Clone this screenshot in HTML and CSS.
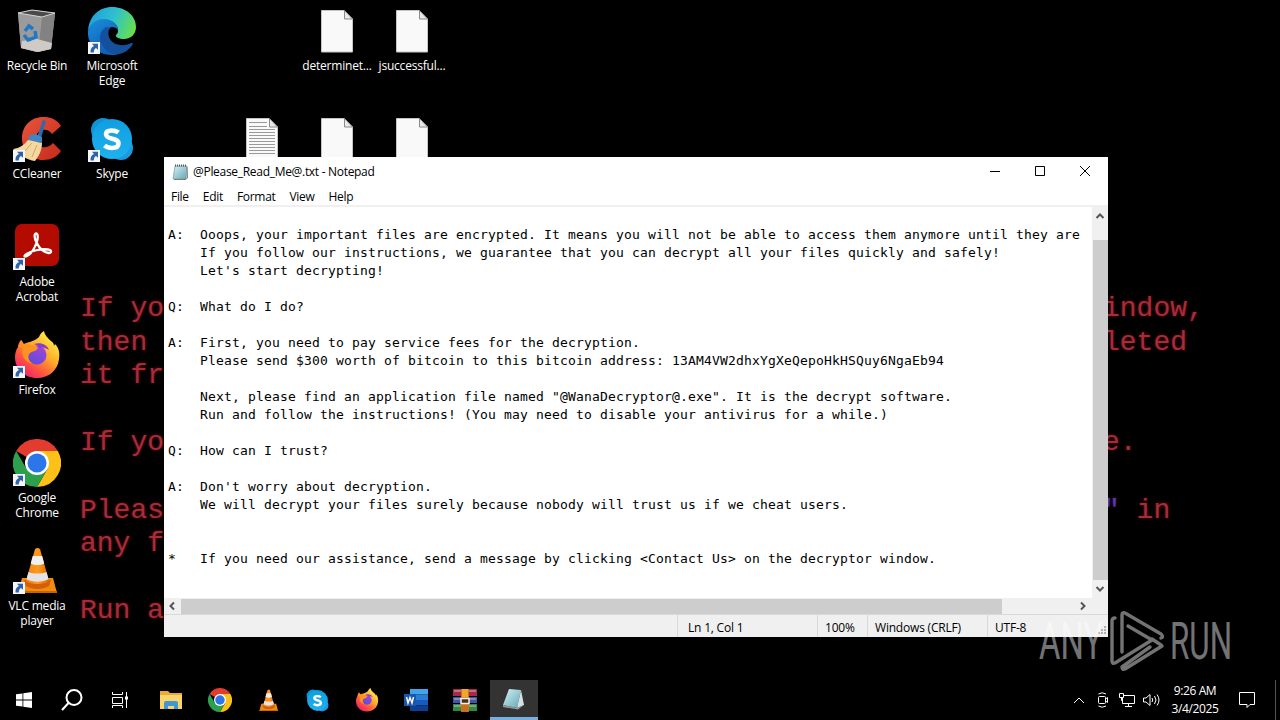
FILE: index.html
```html
<!DOCTYPE html>
<html lang="en">

<head>
    <meta charset="UTF-8">
    <meta name="viewport" content="width=device-width, initial-scale=1.0">
    <title>Desktop</title>
    <link rel="stylesheet" href="styles.css">
</head>

<body>
    <!-- shared icons -->
    <svg class="defs" width="0" height="0">
        <defs>
            <linearGradient id="edgeTop" x1="0" y1="0.3" x2="1" y2="0.6">
                <stop offset="0" stop-color="#1f9fd8" />
                <stop offset="0.5" stop-color="#2fc0cf" />
                <stop offset="1" stop-color="#67e04b" />
            </linearGradient>
            <linearGradient id="edgeMid" x1="0" y1="0" x2="0.6" y2="1">
                <stop offset="0" stop-color="#1b8fdc" />
                <stop offset="1" stop-color="#0f5cb4" />
            </linearGradient>
            <linearGradient id="skypeBg" x1="0" y1="0" x2="0" y2="1">
                <stop offset="0" stop-color="#0f9fe0" />
                <stop offset="1" stop-color="#1fb0ee" />
            </linearGradient>
            <linearGradient id="foxBody" x1="0.85" y1="0.1" x2="0.2" y2="0.95">
                <stop offset="0" stop-color="#fff04a" />
                <stop offset="0.4" stop-color="#ffab28" />
                <stop offset="0.7" stop-color="#ff5a3c" />
                <stop offset="1" stop-color="#f0206e" />
            </linearGradient>
            <linearGradient id="foxGlobe" x1="0.8" y1="0" x2="0.2" y2="1">
                <stop offset="0" stop-color="#a542dd" />
                <stop offset="1" stop-color="#5a4fd6" />
            </linearGradient>
            <linearGradient id="cone" x1="0" y1="0" x2="1" y2="0">
                <stop offset="0" stop-color="#f08010" />
                <stop offset="0.5" stop-color="#ff9a1e" />
                <stop offset="1" stop-color="#e06a00" />
            </linearGradient>
            <linearGradient id="red" x1="0" y1="0" x2="1" y2="1">
                <stop offset="0" stop-color="#e8553c" />
                <stop offset="1" stop-color="#c62a1c" />
            </linearGradient>
            <linearGradient id="pad" x1="0" y1="0" x2="1" y2="1">
                <stop offset="0" stop-color="#d8f0f5" />
                <stop offset="1" stop-color="#5fa9b8" />
            </linearGradient>
        </defs>
        <symbol id="shortcut" viewBox="0 0 12 12">
            <rect width="12" height="12" fill="#f4f6fa" />
            <path d="M4 1.800h6v6L8 6C6.300 7 5.800 8.500 5.800 10.600H2.600C2 7.500 3.500 5 6 3.900z" fill="#2f62a8" />
        </symbol>
        <symbol id="chrome" viewBox="0 0 48 48">
            <path d="M24 24 3.200 12A24 24 0 0 1 44.800 12z" fill="#e33b2e" />
            <path d="M44.800 12A24 24 0 0 1 24 48L34.400 30 24 12z" fill="#fbc116" />
            <path d="M3.200 12A24 24 0 0 0 24 48L34.400 30 24 24 13.600 30z" fill="#2da04e" />
            <circle cx="24" cy="24" r="12" fill="#fff" />
            <circle cx="24" cy="24" r="9.500" fill="#2a76ea" />
        </symbol>
        <symbol id="skype" viewBox="0 0 48 48">
            <circle cx="15" cy="15" r="12" fill="#0d93d8" />
            <circle cx="33" cy="33" r="12" fill="#1c9ae0" />
            <circle cx="24" cy="24" r="20" fill="url(#skypeBg)" />
            <path d="M30.500 17.500c-2-1.500-4.500-2-7-2-3.500 0-5.500 1.300-5.500 3.800 0 6 12.500 3 12.500 9.200 0 3.200-2.700 4.500-6.500 4.500-3 0-5.500-.8-7.500-2.500" fill="none" stroke="#fff" stroke-width="4.600" />
        </symbol>
        <symbol id="firefox" viewBox="0 0 48 48">
            <path d="M8 9c1 0 2 3 3 4 2-1 4-2 6-2 3-1 7-3 9-5 1-3 3-5 5-6 1 5 4 7 7 10 2 1 3 3 3 5l1-2c4 4 5 9 4 15C45 39 36 47 24 47 11 47 2 38 2 26c0-4 1-7 3-10 0-2 1-5 3-7z" fill="url(#foxBody)" />
            <circle cx="24" cy="24" r="9.500" fill="url(#foxGlobe)" />
            <path d="M5 15c5-3 9-2 13-1 3 0 5 0 7 3-2 4-6 3-8 5-3 3-2 8 3 11-9-2-12-9-10-15z" fill="#ff9320" />
            <path d="M21 13c6-2 13 0 15 6-3-2-6-3-9-2-2-3-4-3-6-4z" fill="#8a3bd0" />
        </symbol>
        <symbol id="vlc" viewBox="0 0 48 48">
            <path d="M9 31h31l4 15H5z" fill="#f28a12" />
            <path d="M5 44h39v2H5z" fill="#c96400" />
            <path d="M11 33h27l-2 6c-6 4-17 4-23 0z" fill="#d45f08" />
            <path d="M22 2q2.500-2 5 0l9 32c-5 4-18 4-23 0z" fill="url(#cone)" />
            <path d="M19.700 9h9.500l2 7.500c-4 2-9.500 2-13.500 0z" fill="#f0f0f0" />
            <path d="M15.500 25c5 2 13 2 18 0l2 7c-6 3.500-16 3.500-22 0z" fill="#e4e4e8" />
        </symbol>
        <symbol id="file" viewBox="0 0 48 48">
            <path d="M8.500 3.500H31l8.500 8.500v33H8.500z" fill="#f9f9f9" stroke="#c4c4c4" />
            <path d="M31.500 3.500v8.500h8z" fill="#e9e9e9" stroke="#8a8a8a" />
        </symbol>
        <symbol id="chevron" viewBox="0 0 10 10">
            <path d="M1.500 7 5 3.500 8.500 7" fill="none" stroke="#555" stroke-width="2" />
        </symbol>
    </svg>

    <div class="wallpaper">
        <pre class="left">If yo
then 
it fr

If yo

Pleas
any f

Run a</pre>
        <pre class="right">indow,
leted


e.

<span class="blue">"</span> in</pre>
    </div>

    <div class="icons">
        <div class="icon c1 r1">
            <svg viewBox="0 0 48 48">
                <path d="M5 6 19 3l23 3-4 36-14 3-16-4z" fill="#a3a3a3" />
                <path d="M5 6 29 10 24 45 8 41z" fill="#9b9b9b" />
                <path d="M29 10 42 6 38 42 25 45z" fill="#828282" />
                <path d="M9 34 24 32 39 36 38 42 25 45 8 41z" fill="#cfcac6" />
                <path d="M5 6 19 3l23 3-13 4z" fill="#4a4a4a" stroke="#d4d4d4" />
                <path d="M12 24l4-5 4 3M11 28l4 5 3-1M18 32l5-2-1-6" fill="none" stroke="#2078c4" stroke-width="3.500" />
            </svg>
            <span>Recycle Bin</span>
        </div>
        <div class="icon c2 r1">
            <svg viewBox="0 0 48 48">
                <path d="M0 24C1 9 11 0 24 0c14 0 24 9 24 20 0 7-5 12-12 12-5 0-9-2-8-4 2-2 2-3 2-5 0-6-7-10-14-9C8 14 2 18 0 24z" fill="url(#edgeTop)" />
                <path d="M0 24C2 16 9 12 16 12c8 0 14 5 14 11-1-2-4-3-6-3-5 1-7 6-7 11 0 8 6 15 14 16-3 1-6 1-8 1C9 48-1 37 0 24z" fill="url(#edgeMid)" />
                <path d="M18 20c-6 4-8 11-4 18 3 5 9 10 17 9 6-1 11-5 14-10 0-1-1-1-2-1-9 5-20 1-22-6-1-3-1-6 1-9-1-1-3-1-4-1z" fill="#14509c" />
            </svg>
            <svg class="badge"><use href="#shortcut" /></svg>
            <span>Microsoft<br>Edge</span>
        </div>
        <div class="icon c1 r2">
            <svg viewBox="0 0 48 48">
                <path d="M48 11C43 3 36 2 30 2 18 2 9 11 9 23c0 13 9 22 21 22 8 0 14-3 18-9l-8-8c-7 8-17 4-17-4 0-10 11-12 16-5z" fill="url(#red)" />
                <path d="M30 5l3 1-5 17-4-1z" fill="#2a6cae" />
                <path d="M17 20q6-2 12 2v6l-14-3z" fill="#3f86c6" />
                <path d="M15 25l14 3c0 7-3 13-7 18-8-1-16-6-22-12 7-1 11-4 15-9z" fill="#f4d8a0" />
                <path d="M12 36l7-8M19 42l5-12" stroke="#cda86a" fill="none" />
            </svg>
            <svg class="badge"><use href="#shortcut" /></svg>
            <span>CCleaner</span>
        </div>
        <div class="icon c2 r2">
            <svg><use href="#skype" /></svg>
            <svg class="badge"><use href="#shortcut" /></svg>
            <span>Skype</span>
        </div>
        <div class="icon c1 r3">
            <svg viewBox="0 0 48 48">
                <rect x="2" y="1" width="44" height="42" rx="7" fill="#b30b00" />
                <path d="M13 33.500c5-2 9-9 11-15 1.200-4 1-8-1-8s-1.800 5 .5 9c3 6 8 10 12 10.500 3.500.3 3.500-3-.5-3.500-7-1-17 1.500-21.500 4.500-2.500 1.500-2.500 3-.5 2.500z" fill="none" stroke="#fff" stroke-width="2.300" />
            </svg>
            <svg class="badge"><use href="#shortcut" /></svg>
            <span>Adobe<br>Acrobat</span>
        </div>
        <div class="icon c1 r4">
            <svg><use href="#firefox" /></svg>
            <svg class="badge"><use href="#shortcut" /></svg>
            <span>Firefox</span>
        </div>
        <div class="icon c1 r5">
            <svg><use href="#chrome" /></svg>
            <svg class="badge"><use href="#shortcut" /></svg>
            <span>Google<br>Chrome</span>
        </div>
        <div class="icon c1 r6">
            <svg><use href="#vlc" /></svg>
            <svg class="badge"><use href="#shortcut" /></svg>
            <span>VLC media<br>player</span>
        </div>
        <div class="icon c5 r1">
            <svg><use href="#file" /></svg>
            <span>determinet...</span>
        </div>
        <div class="icon c6 r1">
            <svg><use href="#file" /></svg>
            <span>jsuccessful...</span>
        </div>
        <div class="icon c4 r2">
            <svg viewBox="0 0 48 48">
                <use href="#file" />
                <path d="M11 7.500h18M11 11.500h18M11 14.500h26M11 17.500h26M11 20.500h26M11 23.500h26M11 26.500h26M11 29.500h26M11 32.500h26M11 35.500h26M11 38.500h26" stroke="#999" />
            </svg>
        </div>
        <div class="icon c5 r2">
            <svg><use href="#file" /></svg>
        </div>
        <div class="icon c6 r2">
            <svg><use href="#file" /></svg>
        </div>
    </div>

    <div class="window">
        <div class="titlebar">
            <svg class="app-icon" viewBox="0 0 16 16">
                <path d="M3 2h12l-1 13H1z" fill="url(#pad)" stroke="#6a9aa6" stroke-width="0.700" />
                <path d="M3 1.500h12" stroke="#555" stroke-dasharray="1 1" stroke-width="2" />
                <path d="M15 3l.5 11-2 1.500H2" fill="none" stroke="#8a7a66" />
            </svg>
            <span class="title">@Please_Read_Me@.txt - Notepad</span>
            <div class="controls">
                <svg viewBox="0 0 12 12"><path d="M1 6.500h10" /></svg>
                <svg viewBox="0 0 12 12"><path d="M1.500 1.500h9v9h-9z" /></svg>
                <svg viewBox="0 0 12 12"><path d="M1 1l10 10M11 1 1 11" /></svg>
            </div>
        </div>
        <div class="menu">
            <span>File</span>
            <span>Edit</span>
            <span>Format</span>
            <span>View</span>
            <span>Help</span>
        </div>
        <div class="editor">
            <pre class="text">A:  Ooops, your important files are encrypted. It means you will not be able to access them anymore until they are
    If you follow our instructions, we guarantee that you can decrypt all your files quickly and safely!
    Let's start decrypting!

Q:  What do I do?

A:  First, you need to pay service fees for the decryption.
    Please send $300 worth of bitcoin to this bitcoin address: 13AM4VW2dhxYgXeQepoHkHSQuy6NgaEb94

    Next, please find an application file named "@WanaDecryptor@.exe". It is the decrypt software.
    Run and follow the instructions! (You may need to disable your antivirus for a while.)

Q:  How can I trust?

A:  Don't worry about decryption.
    We will decrypt your files surely because nobody will trust us if we cheat users.


*   If you need our assistance, send a message by clicking &lt;Contact Us&gt; on the decryptor window.</pre>
            <div class="vscroll">
                <svg><use href="#chevron" /></svg>
                <div class="thumb"></div>
                <svg class="down"><use href="#chevron" /></svg>
            </div>
        </div>
        <div class="hscroll">
            <svg class="prev"><use href="#chevron" /></svg>
            <div class="thumb"></div>
            <svg class="next"><use href="#chevron" /></svg>
        </div>
        <div class="status">
            <span class="pos">Ln 1, Col 1</span>
            <span class="zoom">100%</span>
            <span class="eol">Windows (CRLF)</span>
            <span class="enc">UTF-8</span>
            <svg class="grip" viewBox="0 0 10 10">
                <path d="M7 1h2M4 4h2M7 4h2M1 7h2M4 7h2M7 7h2" stroke="#b0b0b0" stroke-width="2" />
            </svg>
        </div>
    </div>

    <svg class="watermark" viewBox="0 0 204 66">
        <g fill="#fff">
            <text x="3" y="51" textLength="64" lengthAdjust="spacingAndGlyphs">ANY</text>
            <text x="134" y="51" textLength="62" lengthAdjust="spacingAndGlyphs">RUN</text>
        </g>
        <g fill="none" stroke="#fff" stroke-width="3.400" stroke-linejoin="round" stroke-linecap="round">
            <path d="M86 44V7q0-3 3-2l36 21q3 3 0 4" />
            <path d="M79 10q-3 0-3 3v40q0 3 3 2l37-23L92 18" />
            <path d="M126 38 89 61q-3 1-3-2l28-20" />
            <path d="M116 31l9 6" />
        </g>
    </svg>

    <div class="taskbar">
        <div class="btn">
            <svg width="16" height="16" viewBox="0 0 16 16"><path d="M0 2.300 6.500 1.400V7.600H0zM7.300 1.300 16 0v7.600H7.300zM0 8.400h6.500v6.200L0 13.700zM7.300 8.400H16V16l-8.700-1.300z" fill="#fff" /></svg>
        </div>
        <div class="btn">
            <svg width="22" height="22" viewBox="0 0 22 22" fill="none" stroke="#fff" stroke-width="2"><circle cx="13" cy="8.500" r="7.500" /><path d="M7.500 14 1 21" /></svg>
        </div>
        <div class="btn tasks">
            <svg width="16" height="16" viewBox="0 0 16 16" fill="none" stroke="#fff"><path d="M.5 0v2.500h10V0M.5 5.500h10v6H.5zM.5 16v-2.500h10V16M14.500 0v16" /><path d="M13 6h3" stroke-width="3" /></svg>
        </div>
        <div class="btn app">
            <svg width="22" height="22" viewBox="0 0 22 22">
                <path d="M0 2h8l2 2h12v15H0z" fill="#e8ad35" />
                <path d="M0 6h22v14H0z" fill="#fbd56b" />
                <path d="M4 20v-6q0-2 2-2h10q2 0 2 2v6h-4v-3H8v3z" fill="#3f97d3" />
            </svg>
        </div>
        <div class="btn app"><svg width="24" height="24"><use href="#chrome" /></svg></div>
        <div class="btn app"><svg width="23" height="23"><use href="#vlc" /></svg></div>
        <div class="btn app"><svg width="25" height="25"><use href="#skype" /></svg></div>
        <div class="btn app"><svg width="24" height="24"><use href="#firefox" /></svg></div>
        <div class="btn app">
            <svg width="24" height="22" viewBox="0 0 24 22">
                <path d="M6 0h18v5.500H6z" fill="#41a5ee" />
                <path d="M6 5.500h18V11H6z" fill="#2b7cd3" />
                <path d="M6 11h18v5.500H6z" fill="#185abd" />
                <path d="M6 16.500h18V22H6z" fill="#103f91" />
                <path d="M0 5h12v12H0z" fill="#1a56b0" />
                <path d="M2.500 8 4 14 6 8.500 8 14 9.500 8" fill="none" stroke="#fff" stroke-width="1.400" />
            </svg>
        </div>
        <div class="btn app">
            <svg width="24" height="23" viewBox="0 0 24 23">
                <path d="M0 0h24v7H0z" fill="#a8284c" />
                <path d="M0 8h24v6H0z" fill="#3e55b0" />
                <path d="M0 15h24v7H0z" fill="#2f8a45" />
                <path d="M1 2h22M1 10h22M1 17h22" stroke="#d9b9b0" />
                <path d="M8 0h8v23H8z" fill="#c8701c" />
                <path d="M9 0h6v8H9z" fill="#f0a828" />
                <path d="M8 9.500h8v5H8z" fill="#4a3018" stroke="#f4f0e4" stroke-width="1.500" />
            </svg>
        </div>
        <div class="btn app active">
            <svg width="22" height="22" viewBox="0 0 22 22">
                <path d="M7 1l12 1-4 18-14-3z" fill="url(#pad)" />
                <path d="M19 2l3 15-7 3z" fill="#d4e2e6" />
                <path d="M1 17l14 3 7-3-6 4.500L1 19z" fill="#999" />
            </svg>
        </div>
        <div class="tray">
            <svg width="12" height="8" viewBox="0 0 12 8"><path d="M1 7l5-5 5 5" /></svg>
            <svg class="camera" width="12" height="16" viewBox="0 0 12 16"><path d="M1.500 5.500q0-1 1-1h5q1 0 1 1v5q0 1-1 1h-5q-1 0-1-1zM8.500 7l2-1.500v5L8.500 9M1.500 2Q5-.5 9 2M1.500 14q3.500 2.500 7.500 0" /></svg>
            <svg class="network" width="16" height="14" viewBox="0 0 16 14"><path d="M5 2.500h10.500v8H3.500V5M9.500 10.500v3M6 13.500h7M.5.500h4v4h-4zM2.500 4.500v3h1" /></svg>
            <svg width="17" height="14" viewBox="0 0 17 14"><path d="M.5 5v4h2.500l4 3.500v-11L3 5zM9 5q1.500 2 0 4M11.500 3q3 4 0 8M14 1.500q4 5.500 0 11" /></svg>
            <div class="clock">9:26 AM<br>3/4/2025</div>
            <svg class="notify" width="16" height="16" viewBox="0 0 16 16"><path d="M.5.500h15v12H11l-3 3v-3H.5z" /></svg>
        </div>
    </div>
</body>

</html>
```

FILE: styles.css
```css
* {
    box-sizing: border-box;
}

body {
    margin: 0;
    width: 1280px;
    height: 720px;
    overflow: hidden;
    position: relative;
    background-color: #000;
    color: #fff;
    font-family: 'Open Sans', 'Noto Sans', sans-serif;
    font-size: 12px;
}

pre {
    margin: 0;
}

.defs {
    position: absolute;
}

.wallpaper {
    position: absolute;
    inset: 0;
    display: flex;
    padding: 292px 0 0 80px;
}

.wallpaper pre {
    font-family: 'Liberation Mono', monospace;
    font-size: 28px;
    line-height: 33.6px;
    color: #a82c38;
    text-shadow: 0 0 3px #700c18;
}

.wallpaper .left {
    width: 1023px;
}

.wallpaper .blue {
    color: #4040c0;
}

.icons {
    position: absolute;
    left: 0;
    top: 0;
    display: grid;
    grid-template-columns: repeat(6, 75px);
    grid-template-rows: repeat(6, 108px);
}

.icon {
    position: relative;
    padding: 7px 1px 0 0;
    text-align: center;
    line-height: 15px;
    letter-spacing: -0.2px;
}

.icon svg {
    display: block;
    width: 48px;
    height: 48px;
    margin: 0 auto 3px;
}

.icon span {
    display: block;
    margin: 0 -4px;
    white-space: nowrap;
}

.icon .badge {
    position: absolute;
    left: 13px;
    top: 42px;
    width: 12px;
    height: 12px;
    margin: 0;
}

.c1 { grid-column: 1; }
.c2 { grid-column: 2; }
.c4 { grid-column: 4; }
.c5 { grid-column: 5; }
.c6 { grid-column: 6; }
.r1 { grid-row: 1; }
.r2 { grid-row: 2; }
.r3 { grid-row: 3; }
.r4 { grid-row: 4; }
.r5 { grid-row: 5; }
.r6 { grid-row: 6; }

/* Notepad */
.window {
    position: absolute;
    left: 164px;
    top: 157px;
    width: 944px;
    height: 480px;
    display: flex;
    flex-direction: column;
    background-color: #fff;
    color: #000;
}

.titlebar {
    display: flex;
    align-items: center;
    height: 30px;
    padding-left: 8px;
}

.app-icon {
    width: 16px;
    height: 16px;
    margin-right: 5px;
}

.title {
    letter-spacing: -0.3px;
}

.controls {
    display: flex;
    gap: 33px;
    margin-left: auto;
    margin-right: 17px;
    margin-top: -2px;
}

.controls svg {
    width: 12px;
    height: 12px;
    fill: none;
    stroke: #000;
}

.menu {
    display: flex;
    gap: 14px;
    height: 21px;
    padding-left: 7px;
    line-height: 21px;
    letter-spacing: -0.3px;
    border-bottom: 2px solid #f0f0f0;
}

.editor {
    display: flex;
    height: 391px;
}

.text {
    flex: 1;
    padding: 19px 0 0 4px;
    font-family: 'DejaVu Sans Mono', monospace;
    font-size: 13px;
    line-height: 18px;
    letter-spacing: 0.173px;
}

.vscroll {
    display: flex;
    flex-direction: column;
    align-items: center;
    width: 16px;
    background-color: #f0f0f0;
}

.vscroll svg,
.hscroll svg {
    width: 10px;
    height: 10px;
}

.vscroll svg {
    margin: 4px 0;
}

.vscroll .thumb {
    width: 15px;
    height: 340px;
    margin-top: 15px;
    background-color: #cdcdcd;
}

.vscroll .down {
    transform: rotate(180deg);
}

.hscroll {
    display: flex;
    align-items: center;
    height: 16px;
    padding-left: 3px;
    background-color: #f0f0f0;
}

.hscroll .thumb {
    width: 821px;
    height: 15px;
    margin-left: 4px;
    background-color: #cdcdcd;
}

.hscroll .prev {
    transform: rotate(-90deg);
}

.hscroll .next {
    margin-left: 76px;
    transform: rotate(90deg);
}

.status {
    position: relative;
    display: flex;
    flex: 1;
    padding-left: 513px;
    line-height: 25px;
    background-color: #f0f0f0;
    border-top: 1px solid #d9d9d9;
    letter-spacing: -0.2px;
}

.status span {
    height: 22px;
    padding-left: 7px;
    border-left: 1px solid #d9d9d9;
}

.pos {
    width: 140px;
}

.status .pos {
    padding-left: 10px;
}

.zoom {
    width: 50px;
}

.eol {
    width: 120px;
}

.grip {
    position: absolute;
    right: 1px;
    bottom: 1px;
    width: 10px;
    height: 10px;
}

.watermark {
    position: absolute;
    left: 1036px;
    top: 608px;
    width: 204px;
    height: 66px;
    opacity: 0.45;
    font-family: Roboto, sans-serif;
    font-size: 52px;
}

/* Taskbar */
.taskbar {
    position: absolute;
    left: 0;
    bottom: 0;
    display: flex;
    width: 1280px;
    height: 40px;
}

.btn {
    display: flex;
    align-items: center;
    justify-content: center;
    width: 48px;
}

.tasks {
    margin-right: 2px;
}

.app {
    width: 49px;
}

.active {
    width: 48px;
    margin-left: 1px;
    padding-right: 3px;
    background-color: #333;
    border-bottom: 3px solid #76b0e0;
}

.tray {
    display: flex;
    align-items: center;
    gap: 10px;
    margin-left: auto;
    margin-right: 4px;
    padding-right: 20px;
    border-right: 1px solid #555;
}

.tray svg {
    fill: none;
    stroke: #fff;
}

.tray .camera {
    margin-left: 2px;
}

.tray .network {
    margin-right: -2px;
}

.clock {
    width: 50px;
    text-align: center;
    line-height: 18px;
    letter-spacing: -0.4px;
}

.tray .notify {
    margin-left: 9px;
}
```
